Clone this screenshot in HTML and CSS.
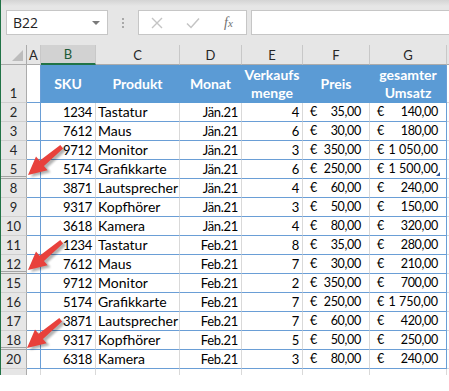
FILE: index.html
```html
<!DOCTYPE html>
<html lang="de">
<head>
<meta charset="UTF-8" />
<title>Tabelle</title>
<link rel="stylesheet" href="styles.css">
</head>
<body>
<div class="page">
  <div class="workbook">
    <div class="toolbar">
      <div class="namebox"><span>B22</span><span class="caret"></span></div>
      <div class="dots"><i></i><i></i><i></i></div>
      <div class="fxbox">
        <span class="btn">
          <svg width="12" height="12" viewBox="0 0 12 12"><path d="M1 1L11 11M11 1L1 11" stroke="#c4c4c4" stroke-width="1.4" fill="none"/></svg>
        </span>
        <span class="btn">
          <svg width="14" height="12" viewBox="0 0 14 12"><path d="M1 6.5L5 10.5L13 1.5" stroke="#c4c4c4" stroke-width="1.5" fill="none"/></svg>
        </span>
        <span class="btn fx"><i>f<small>x</small></i></span>
      </div>
      <div class="formula"></div>
    </div>

    <div class="row colhead">
      <div class="corner"><span></span></div>
      <div>A</div>
      <div class="sel">B</div>
      <div>C</div>
      <div>D</div>
      <div>E</div>
      <div>F</div>
      <div>G</div>
      <div></div>
    </div>

    <div class="row head">
      <div class="rh">1</div>
      <div class="cell a"></div>
      <div class="cell t">SKU</div>
      <div class="cell t">Produkt</div>
      <div class="cell t">Monat</div>
      <div class="cell t">Verkaufs<br>menge</div>
      <div class="cell t">Preis</div>
      <div class="cell t last">gesamter<br>Umsatz</div>
      <div class="cell out"></div>
    </div>

    <div class="row">
      <div class="rh">2</div><div class="cell a"></div>
      <div class="cell num">1234</div><div class="cell">Tastatur</div><div class="cell num">Jän.21</div><div class="cell num">4</div>
      <div class="cell eur"><span>€</span><span>35,00</span></div>
      <div class="cell eur last"><span>€</span><span>140,00</span></div>
      <div class="cell out"></div>
    </div>
    <div class="row">
      <div class="rh">3</div><div class="cell a"></div>
      <div class="cell num">7612</div><div class="cell">Maus</div><div class="cell num">Jän.21</div><div class="cell num">6</div>
      <div class="cell eur"><span>€</span><span>30,00</span></div>
      <div class="cell eur last"><span>€</span><span>180,00</span></div>
      <div class="cell out"></div>
    </div>
    <div class="row">
      <div class="rh">4</div><div class="cell a"></div>
      <div class="cell num">9712</div><div class="cell">Monitor</div><div class="cell num">Jän.21</div><div class="cell num">3</div>
      <div class="cell eur"><span>€</span><span>350,00</span></div>
      <div class="cell eur last"><span>€</span><span>1&#8239;050,00</span></div>
      <div class="cell out"></div>
    </div>
    <div class="row">
      <div class="rh gap">5</div><div class="cell a"></div>
      <div class="cell num">5174</div><div class="cell">Grafikkarte</div><div class="cell num">Jän.21</div><div class="cell num">6</div>
      <div class="cell eur"><span>€</span><span>250,00</span></div>
      <div class="cell eur last handle"><span>€</span><span>1&#8239;500,00</span></div>
      <div class="cell out"></div>
    </div>
    <div class="row">
      <div class="rh">8</div><div class="cell a"></div>
      <div class="cell num">3871</div><div class="cell">Lautsprecher</div><div class="cell num">Jän.21</div><div class="cell num">4</div>
      <div class="cell eur"><span>€</span><span>60,00</span></div>
      <div class="cell eur last"><span>€</span><span>240,00</span></div>
      <div class="cell out"></div>
    </div>
    <div class="row">
      <div class="rh">9</div><div class="cell a"></div>
      <div class="cell num">9317</div><div class="cell">Kopfhörer</div><div class="cell num">Jän.21</div><div class="cell num">3</div>
      <div class="cell eur"><span>€</span><span>50,00</span></div>
      <div class="cell eur last"><span>€</span><span>150,00</span></div>
      <div class="cell out"></div>
    </div>
    <div class="row">
      <div class="rh">10</div><div class="cell a"></div>
      <div class="cell num">3618</div><div class="cell">Kamera</div><div class="cell num">Jän.21</div><div class="cell num">4</div>
      <div class="cell eur"><span>€</span><span>80,00</span></div>
      <div class="cell eur last"><span>€</span><span>320,00</span></div>
      <div class="cell out"></div>
    </div>
    <div class="row">
      <div class="rh">11</div><div class="cell a"></div>
      <div class="cell num">1234</div><div class="cell">Tastatur</div><div class="cell num">Feb.21</div><div class="cell num">8</div>
      <div class="cell eur"><span>€</span><span>35,00</span></div>
      <div class="cell eur last"><span>€</span><span>280,00</span></div>
      <div class="cell out"></div>
    </div>
    <div class="row">
      <div class="rh gap">12</div><div class="cell a"></div>
      <div class="cell num">7612</div><div class="cell">Maus</div><div class="cell num">Feb.21</div><div class="cell num">7</div>
      <div class="cell eur"><span>€</span><span>30,00</span></div>
      <div class="cell eur last"><span>€</span><span>210,00</span></div>
      <div class="cell out"></div>
    </div>
    <div class="row">
      <div class="rh">15</div><div class="cell a"></div>
      <div class="cell num">9712</div><div class="cell">Monitor</div><div class="cell num">Feb.21</div><div class="cell num">2</div>
      <div class="cell eur"><span>€</span><span>350,00</span></div>
      <div class="cell eur last"><span>€</span><span>700,00</span></div>
      <div class="cell out"></div>
    </div>
    <div class="row">
      <div class="rh">16</div><div class="cell a"></div>
      <div class="cell num">5174</div><div class="cell">Grafikkarte</div><div class="cell num">Feb.21</div><div class="cell num">7</div>
      <div class="cell eur"><span>€</span><span>250,00</span></div>
      <div class="cell eur last"><span>€</span><span>1&#8239;750,00</span></div>
      <div class="cell out"></div>
    </div>
    <div class="row">
      <div class="rh">17</div><div class="cell a"></div>
      <div class="cell num">3871</div><div class="cell">Lautsprecher</div><div class="cell num">Feb.21</div><div class="cell num">7</div>
      <div class="cell eur"><span>€</span><span>60,00</span></div>
      <div class="cell eur last"><span>€</span><span>420,00</span></div>
      <div class="cell out"></div>
    </div>
    <div class="row">
      <div class="rh gap">18</div><div class="cell a"></div>
      <div class="cell num">9317</div><div class="cell">Kopfhörer</div><div class="cell num">Feb.21</div><div class="cell num">5</div>
      <div class="cell eur"><span>€</span><span>50,00</span></div>
      <div class="cell eur last"><span>€</span><span>250,00</span></div>
      <div class="cell out"></div>
    </div>
    <div class="row">
      <div class="rh">20</div><div class="cell a"></div>
      <div class="cell num">6318</div><div class="cell">Kamera</div><div class="cell num">Feb.21</div><div class="cell num">3</div>
      <div class="cell eur"><span>€</span><span>80,00</span></div>
      <div class="cell eur last"><span>€</span><span>240,00</span></div>
      <div class="cell out"></div>
    </div>
    <div class="row blank">
      <div class="rh"></div><div class="cell"></div><div class="cell"></div><div class="cell"></div><div class="cell"></div>
      <div class="cell"></div><div class="cell"></div><div class="cell"></div><div class="cell"></div>
    </div>
  </div>

  <!-- callout arrows pointing at the hidden rows -->
  <svg class="arrows" width="449" height="391" viewBox="0 0 449 391">
    <defs>
      <path id="arrow" d="M0 -2.2L26 -3.4L26 -9L44 0L26 9L26 3.4L0 2.2Z"/>
      <filter id="soft" x="-50%" y="-50%" width="200%" height="200%">
        <feGaussianBlur stdDeviation="1.2"/>
      </filter>
    </defs>
    <g fill="#000" opacity="0.3" filter="url(#soft)">
      <use href="#arrow" transform="translate(31 177) rotate(140) translate(-44 0)"/>
      <use href="#arrow" transform="translate(31 272) rotate(140) translate(-44 0)"/>
      <use href="#arrow" transform="translate(30 350) rotate(140) translate(-44 0)"/>
    </g>
    <g fill="#e8413c">
      <use href="#arrow" transform="translate(28 175) rotate(140) translate(-44 0)"/>
      <use href="#arrow" transform="translate(28 270) rotate(140) translate(-44 0)"/>
      <use href="#arrow" transform="translate(27 348) rotate(140) translate(-44 0)"/>
    </g>
  </svg>
</div>
</body>
</html>
```

FILE: styles.css
```css
body {
  margin: 0;
  background: #fff;
  font-family: Lato, 'Liberation Sans', sans-serif;
  color: #000;
}
.page {
  position: relative;
  width: 449px;
  height: 391px;
  overflow: hidden;
}
.workbook {
  width: 448px;
  height: 375px;
  border-left: 1px solid #217346;
  overflow: hidden;
}
.toolbar {
  height: 45px;
  box-sizing: border-box;
  padding: 10px 0 0 5px;
  display: flex;
  align-items: flex-start;
  background: linear-gradient(#d4d4d4, #e6e6e6 6px);
}
.namebox {
  width: 102px;
  height: 25px;
  box-sizing: border-box;
  border: 1px solid #c6c6c6;
  background: #fff;
  display: flex;
  align-items: center;
  justify-content: space-between;
  padding: 0 7px 0 6px;
  font: 14px 'Open Sans', sans-serif;
  color: #222;
}
.caret {
  width: 0;
  height: 0;
  border-left: 4px solid transparent;
  border-right: 4px solid transparent;
  border-top: 4px solid #7a7a7a;
}
.dots {
  width: 30px;
  height: 25px;
  display: flex;
  flex-direction: column;
  align-items: center;
  justify-content: center;
  gap: 2px;
}
.dots i {
  width: 2px;
  height: 2px;
  background: #a8a8a8;
}
.fxbox {
  width: 109px;
  height: 25px;
  box-sizing: border-box;
  border: 1px solid #c6c6c6;
  background: #fff;
  display: flex;
}
.fxbox .btn {
  width: 36px;
  display: flex;
  align-items: center;
  justify-content: center;
}
.fxbox .btn:first-child {
  width: 38px;
}
.fx {
  font: italic 14px 'Liberation Serif', serif;
  color: #707070;
}
.fx small {
  font-size: 11px;
}
.formula {
  flex: 1;
  height: 25px;
  margin: 0 -4px 0 4px;
  box-sizing: border-box;
  border: 1px solid #c6c6c6;
  background: #fff;
}

/* grid */
.row {
  display: grid;
  grid-template-columns: 26px 14px 55px 84px 62px 61px 67px 77px 40px;
  height: 19px;
}
.row > div {
  box-sizing: border-box;
  border-right: 1px solid #d9d9d9;
  border-bottom: 1px solid #d9d9d9;
  overflow: hidden;
  white-space: nowrap;
}
.colhead {
  height: 20px;
  background: #e6e6e6;
}
.colhead > div {
  border-right-color: #c8c8c8;
  border-bottom-color: #ababab;
  display: flex;
  align-items: center;
  justify-content: center;
  font-size: 13px;
  color: #262626;
}
.colhead .sel {
  background: #d2d2d2;
  border-bottom: 2px solid #217346;
  color: #1c5a36;
}
.colhead .corner {
  align-items: flex-end;
  justify-content: flex-end;
  padding: 0 3px 3px 0;
  border-right-color: #ababab;
}
.corner span {
  width: 0;
  height: 0;
  border-left: 11px solid transparent;
  border-bottom: 11px solid #bcbcbc;
}
.rh {
  background: #e6e6e6;
  border-right-color: #ababab !important;
  border-bottom-color: #cfcfcf !important;
  display: flex;
  align-items: flex-end;
  justify-content: center;
  font-size: 13px;
  line-height: 17px;
  color: #262626;
}
/* hidden rows below: double line */
.rh.gap {
  border-bottom-color: #a4a4a4 !important;
  background: linear-gradient(to top, #e6e6e6 1px, #a4a4a4 1px, #a4a4a4 2px, #e6e6e6 2px);
}
.head {
  height: 38px;
}
.cell {
  font-size: 14px;
  line-height: 18px;
  padding: 0 2px;
  border-bottom-color: #6a9ed6 !important;
}
.cell.a {
  padding: 0;
  border-right-color: #6a9ed6;
}
.cell.out,
.blank .cell {
  border-bottom-color: #d9d9d9 !important;
}
.cell.last {
  border-right-color: #6a9ed6;
}
.cell.t {
  background: #5b9bd5;
  border-right-color: #5b9bd5;
  border-bottom-color: #5b9bd5 !important;
  color: #fff;
  font-weight: 700;
  display: flex;
  align-items: center;
  justify-content: center;
  text-align: center;
  overflow: visible;
}
.cell.t.last {
  border-right-color: #6a9ed6;
}
.num {
  text-align: right;
  padding-right: 3px;
  font-size: 13px;
  letter-spacing: -0.3px;
}
.eur {
  display: flex;
  justify-content: space-between;
  padding: 0 8px 0 7px;
  font-size: 12.5px;
  letter-spacing: -0.3px;
}
.handle {
  position: relative;
}
.handle::after {
  content: '';
  position: absolute;
  right: 6px;
  bottom: 2px;
  border-left: 4px solid transparent;
  border-bottom: 4px solid #2f5597;
}
.arrows {
  position: absolute;
  left: 0;
  top: 0;
  pointer-events: none;
}
```
